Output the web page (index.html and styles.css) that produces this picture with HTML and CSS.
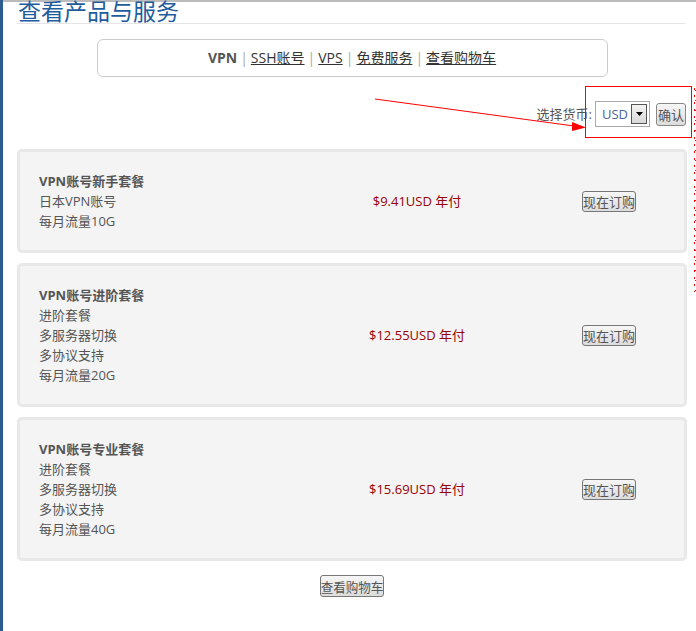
FILE: index.html
```html
<!DOCTYPE html>
<html lang="zh-CN">
<head>
<meta charset="utf-8">
<title>查看产品与服务</title>
<link rel="stylesheet" href="styles.css">
</head>
<body>
<div class="frame">
  <div class="page">
    <h1 class="title">查看产品与服务</h1>

    <div class="nav">
      <b class="nav-current">VPN</b><span class="sep">|</span><a href="#">SSH账号</a><span class="sep">|</span><a href="#">VPS</a><span class="sep">|</span><a href="#">免费服务</a><span class="sep">|</span><a href="#">查看购物车</a>
    </div>

    <form class="currency">
      <span class="currency-label">选择货币:</span>
      <span class="select">
        <span class="select-value">USD</span>
        <span class="select-arrow"><svg width="7" height="4" viewBox="0 0 7 4"><path d="M0 0H7L3.5 4Z" fill="#000"/></svg></span>
      </span>
      <button type="button" class="btn btn-confirm">确认</button>
    </form>

    <div class="card">
      <div class="info">
        <strong>VPN账号新手套餐</strong>
        <div>日本VPN账号</div>
        <div>每月流量10G</div>
      </div>
      <div class="price">$9.41USD 年付</div>
      <div class="action"><button type="button" class="btn">现在订购</button></div>
    </div>

    <div class="card">
      <div class="info">
        <strong>VPN账号进阶套餐</strong>
        <div>进阶套餐</div>
        <div>多服务器切换</div>
        <div>多协议支持</div>
        <div>每月流量20G</div>
      </div>
      <div class="price">$12.55USD 年付</div>
      <div class="action"><button type="button" class="btn">现在订购</button></div>
    </div>

    <div class="card">
      <div class="info">
        <strong>VPN账号专业套餐</strong>
        <div>进阶套餐</div>
        <div>多服务器切换</div>
        <div>多协议支持</div>
        <div>每月流量40G</div>
      </div>
      <div class="price">$15.69USD 年付</div>
      <div class="action"><button type="button" class="btn">现在订购</button></div>
    </div>

    <div class="footer">
      <button type="button" class="btn btn-cart">查看购物车</button>
    </div>
  </div>
</div>

<svg class="annotation" width="696" height="631" viewBox="0 0 696 631">
  <rect x="585.5" y="86.5" width="106" height="51" fill="none" stroke="#ff0000" stroke-width="1"/>
  <line x1="375" y1="99" x2="574" y2="126" stroke="#ff0000" stroke-width="1"/>
  <path d="M572 122 L586 127.5 L572 131 Z" fill="#ff0000"/>
  <line x1="694.5" y1="88" x2="694.5" y2="292" stroke="#ff0000" stroke-width="1" stroke-dasharray="2 5"/>
  <line x1="695.5" y1="90" x2="695.5" y2="292" stroke="#ff0000" stroke-width="1" stroke-dasharray="1 9"/>
</svg>
</body>
</html>
```
FILE: styles.css
```css
* { box-sizing: border-box; }

html, body {
  margin: 0;
  padding: 0;
  background: #fff;
  overflow: hidden;
}

body {
  font-family: "Open Sans", "Noto Sans CJK SC", sans-serif;
  font-size: 13px;
  line-height: 20px;
  color: #555;
  width: 696px;
  height: 631px;
  position: relative;
}

.frame {
  border-left: 3px solid #2b5b8f;
  height: 631px;
}

.page {
  border-top: 2px solid #bbb;
  padding: 0 9px 0 14px;
  height: 100%;
}

.title {
  margin: -4px 1px 0 0;
  padding: 0 0 1px 1px;
  font-family: "Noto Sans CJK SC", sans-serif;
  font-weight: normal;
  font-size: 23px;
  line-height: 24px;
  color: #1f5c9e;
  border-bottom: 1px solid #e5e5e5;
}

.nav {
  width: 511px;
  height: 38px;
  margin: 15px auto 0;
  border: 1px solid #ccc;
  border-radius: 6px;
  display: flex;
  align-items: center;
  justify-content: center;
  font-size: 14px;
  color: #333;
  white-space: nowrap;
}

.nav-current {
  color: #555;
  font-weight: bold;
}

.nav a {
  color: #333;
  text-decoration: underline;
}

.sep {
  color: #aaa;
  margin: 0 3px;
}

.currency {
  margin: 24px 1px 0 0;
  display: flex;
  justify-content: flex-end;
  align-items: center;
  height: 26px;
}

.currency-label {
  margin-right: 3px;
  color: #555;
}

.select {
  width: 55px;
  height: 26px;
  border: 1px solid #aaa;
  display: flex;
  align-items: center;
  justify-content: space-between;
  padding: 0 2px 0 6px;
  margin-right: 6px;
  background: #fff;
}

.select-value {
  color: #4a64a0;
  font-size: 13px;
}

.select-arrow {
  width: 16px;
  height: 20px;
  border: 1px solid #555;
  background: linear-gradient(#f4f4f4, #d8d8d8);
  display: flex;
  align-items: center;
  justify-content: center;
}

.select-arrow svg { display: block; }

.btn {
  font-family: "Noto Sans CJK SC", sans-serif;
  font-size: 13px;
  line-height: 17px;
  color: #555;
  border: 1px solid #777;
  border-radius: 3px;
  background: linear-gradient(#f6f6f6, #dcdcdc);
  padding: 1px 2px;
  margin: 0;
  cursor: pointer;
  white-space: nowrap;
}

.btn-confirm {
  width: 30px;
  height: 23px;
  padding: 0;
  border-color: #888;
}

.card {
  display: grid;
  grid-template-columns: 282px 192px 1fr;
  align-items: center;
  background: #f4f4f4;
  border: 3px solid #e8e8e8;
  border-radius: 5px;
  padding: 19px 19px;
  margin-top: 10px;
}

.currency + .card {
  margin-top: 22px;
}

.info strong {
  display: block;
  font-weight: bold;
  color: #555;
}

.price {
  text-align: center;
  color: #990000;
}

.action {
  padding-left: 40px;
  display: flex;
  justify-content: center;
}

.action .btn {
  width: 54px;
  height: 21px;
  padding: 0;
}

.footer {
  margin-top: 14px;
  display: flex;
  justify-content: center;
}

.btn-cart {
  height: 22px;
  padding: 0;
  font-size: 12.6px;
  letter-spacing: -0.1px;
}

.annotation {
  position: absolute;
  left: 0;
  top: 0;
  pointer-events: none;
}
```
